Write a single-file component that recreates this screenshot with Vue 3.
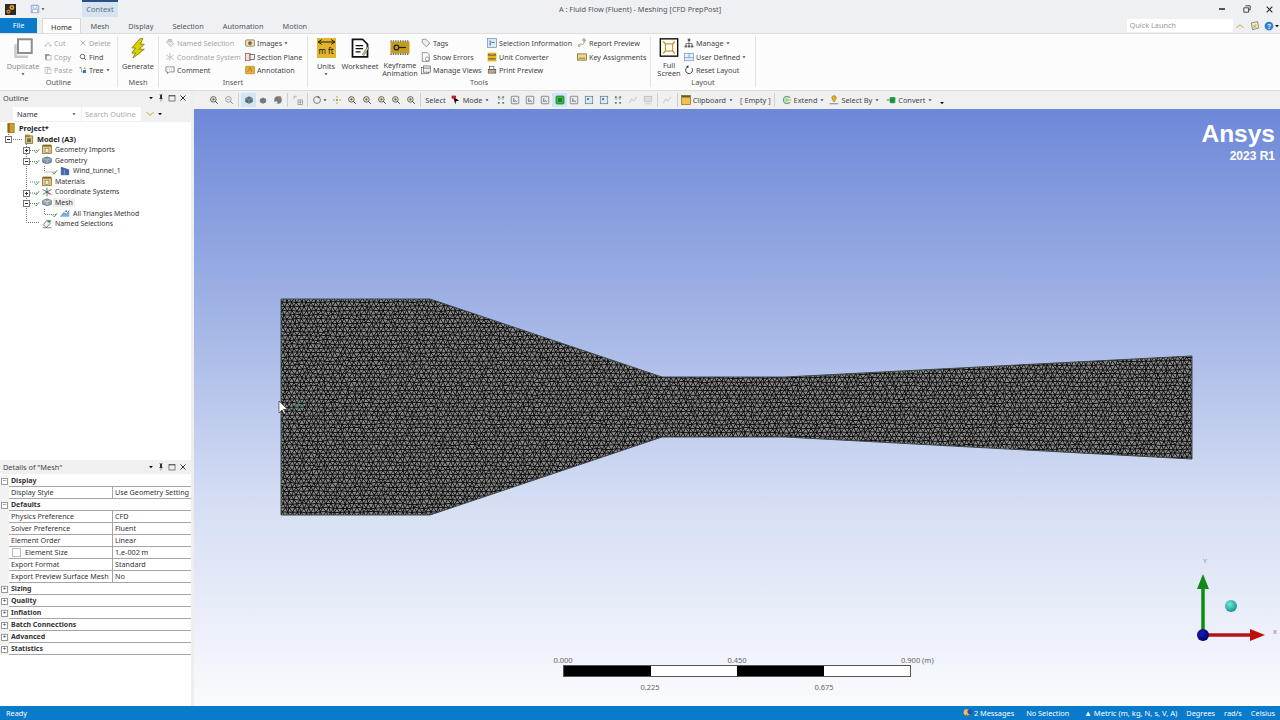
<script setup>
import { computed } from 'vue'

// small icon set, all drawn on a 16x16 box
const icons = {
  app: '<rect width="16" height="16" fill="#2b2b2b"/><circle cx="10" cy="5" r="3.6" fill="#e8a020"/><circle cx="5" cy="11" r="3" fill="#d97a10"/><circle cx="10" cy="5" r="1.2" fill="#2b2b2b"/><circle cx="5" cy="11" r="1" fill="#2b2b2b"/>',
  save: '<path d="M2 2h11l1 1v11H2z" fill="#dfe8f6" stroke="#5f86c4"/><rect x="5" y="2.5" width="6" height="4" fill="#fff" stroke="#5f86c4" stroke-width=".7"/><rect x="4.5" y="9" width="7" height="5" fill="#fff" stroke="#5f86c4" stroke-width=".7"/>',
  caret: '<path d="M4 6h8l-4 5z" fill="#444"/>',
  caretDark: '<path d="M3 5h10l-5 6z" fill="#000"/>',
  duplicate: '<path d="M1 5h2v9h9v2H1z" fill="#c9c9c9"/><rect x="4" y="1" width="11" height="11" fill="#fff" stroke="#8d8d8d" stroke-width="1.6"/>',
  cut: '<path d="M3 13l9-7M13 13L5 6" stroke="#aaa" fill="none"/><circle cx="3" cy="13" r="1.6" fill="none" stroke="#aaa"/><circle cx="13" cy="13" r="1.6" fill="none" stroke="#aaa"/>',
  copy: '<rect x="2" y="2" width="9" height="11" fill="#999"/><rect x="5" y="5" width="9" height="9" fill="#fff" stroke="#888"/>',
  paste: '<rect x="2" y="3" width="10" height="12" fill="#eee" stroke="#aaa"/><rect x="5" y="1.5" width="4" height="3" fill="#bbb"/><rect x="7" y="7" width="7" height="8" fill="#fff" stroke="#aaa"/>',
  del: '<path d="M3 3l10 10M13 3L3 13" stroke="#9a9a9a" stroke-width="1.4" fill="none"/>',
  find: '<circle cx="7" cy="7" r="4.5" fill="none" stroke="#333" stroke-width="1.4"/><path d="M10 10l4 4" stroke="#333" stroke-width="1.6"/>',
  tree: '<rect x="1" y="2" width="4" height="3" fill="#d0a020"/><path d="M5 5v7h3" stroke="#555" fill="none"/><rect x="8" y="8" width="6" height="6" fill="#3a74c4"/><rect x="10" y="3" width="3" height="3" fill="#999"/>',
  bolt: '<path d="M10 0L3 8h3L3 12l3 0-2 4 9-7h-4l4-4h-3l2-5z" fill="#d9d000" stroke="#8d7b00" stroke-width=".7"/>',
  named: '<path d="M2 6l5-4 7 7-5 5z" fill="#e6e6e6" stroke="#aaa"/><rect x="6" y="2" width="5" height="4" fill="#ccc" stroke="#aaa" stroke-width=".6"/>',
  coord: '<path d="M8 2v12M2 5l12 7M14 5L2 12" stroke="#bbb" stroke-width="1.4"/>',
  comment: '<path d="M1.5 3h13v8H7l-3 3v-3H1.5z" fill="#fff" stroke="#555"/><path d="M4 7h1M7 7h1M10 7h1" stroke="#555"/>',
  images: '<rect x="1" y="3" width="14" height="10" rx="1" fill="#eee3b8" stroke="#555"/><circle cx="8" cy="8" r="3" fill="#8c5a20"/>',
  section: '<rect x="1" y="2" width="7" height="12" fill="#f3e7c0" stroke="#912a4a"/><rect x="8" y="4" width="7" height="8" fill="#eee" stroke="#333"/>',
  annotation: '<rect x="1" y="2" width="14" height="12" rx="1" fill="#e5b22a" stroke="#a97b10"/><path d="M4 11l4-7 3 7" stroke="#b03aa0" fill="none"/>',
  sheet: '<path d="M2 1h8l4 4v10H2z" fill="#fff" stroke="#111" stroke-width="1.4"/><path d="M4.500 6h6M4.500 8.500h6M4.500 11h4" stroke="#111"/><path d="M10 13l4-6 1 1-4 6z" fill="#d8cf92" stroke="#555" stroke-width=".5"/>',
  keyframe: '<rect x="0" y="3" width="16" height="10" fill="#c29c1e"/><path d="M0 2.500h16M0 13.500h16" stroke="#222" stroke-dasharray="1 1"/><circle cx="5" cy="8" r="2" fill="none" stroke="#222"/><path d="M7 8h6" stroke="#222"/>',
  tags: '<path d="M2 2h6l6 6-5 6-7-6z" fill="#eee" stroke="#666"/>',
  errors: '<path d="M2 1h8l3 3v11H2z" fill="#fff" stroke="#555"/><circle cx="10" cy="11" r="3" fill="#fff" stroke="#666"/>',
  views: '<rect x="1" y="4" width="11" height="10" fill="#fff" stroke="#555"/><rect x="4" y="1.500" width="11" height="10" fill="#eee" stroke="#555"/><path d="M4 5h11" stroke="#555"/>',
  selinfo: '<rect x="1" y="1" width="14" height="14" fill="#dfeaf6" stroke="#4e7fb5"/><path d="M5 4v8M7 7h5" stroke="#1a4f8a" stroke-width="1.300"/>',
  converter: '<rect x="1" y="1" width="14" height="14" fill="#e2b52e"/><path d="M2 5h12M2 5l2-2M14 5l-2-2M2 11h12" stroke="#222" fill="none"/>',
  print: '<rect x="2" y="7" width="12" height="6" fill="#aaa" stroke="#444"/><rect x="4" y="2" width="7" height="5" fill="#fff" stroke="#444"/><circle cx="5" cy="12" r="2.500" fill="#d9a326"/>',
  report: '<path d="M2 13l4-4 3 2 5-8" stroke="#777" fill="none"/><circle cx="11" cy="3" r="2" fill="#eed889" stroke="#777"/><rect x="2" y="11" width="3" height="3" fill="#eed889" stroke="#777" stroke-width=".6"/>',
  keys: '<rect x="1" y="3" width="14" height="10" fill="#f0d586" stroke="#5a4a1a"/><path d="M3 10h10" stroke="#5a4a1a"/>',
  fullscreen: '<rect x=".7" y=".7" width="14.600" height="14.600" fill="#fff" stroke="#111" stroke-width="1.200"/><rect x="5" y="5" width="6" height="6" fill="none" stroke="#c29c1e"/><path d="M3 3l2 2M13 3l-2 2M3 13l2-2M13 13l-2-2" stroke="#c29c1e" stroke-width="1.200"/>',
  manage: '<path d="M8 5v4M3 12V9h10v3M8 9v3" stroke="#333" fill="none"/><rect x="6" y="1" width="4" height="4" fill="#555"/><rect x="1" y="12" width="4" height="3" fill="#555"/><rect x="6" y="12" width="4" height="3" fill="#555"/><rect x="11" y="12" width="4" height="3" fill="#555"/>',
  userdef: '<rect x="1" y="2" width="14" height="12" fill="#e7f0fa" stroke="#5f86c4"/><path d="M8 2v7M1 9h14" stroke="#5f86c4"/>',
  reset: '<path d="M12.500 5a5.500 5.500 0 1 1-6-2" fill="none" stroke="#333" stroke-width="1.500"/><path d="M7 0v5L3.500 2.800z" fill="#333"/>',
  zoomIn: '<circle cx="7" cy="7" r="4.500" fill="#e5e0c6" stroke="#444" stroke-width="1.200"/><path d="M10 10l4 4" stroke="#444" stroke-width="1.600"/><path d="M5 7h4M7 5v4" stroke="#444"/>',
  zoomOut: '<circle cx="7" cy="7" r="4.500" fill="#eee" stroke="#888" stroke-width="1.200"/><path d="M10 10l4 4" stroke="#888" stroke-width="1.600"/><path d="M5 7h4" stroke="#888"/>',
  cube: '<path d="M8 2l6 3v6l-6 3-6-3V5z" fill="#5d6a72"/><path d="M8 8l6-3M8 8L2 5M8 8v6" stroke="#b5bfc5" stroke-width=".7"/>',
  cube2: '<path d="M8 4l5 2.500v5L8 14l-5-2.500v-5z" fill="#6f7c84"/>',
  cube3: '<circle cx="8" cy="8" r="6" fill="#6f7c84"/><circle cx="11" cy="4" r="2.200" fill="#d26a3a"/><circle cx="5" cy="12" r="2" fill="#eee"/>',
  grid: '<path d="M1 1h5v2H3v3H1z" fill="#bbb"/><rect x="8" y="8" width="7" height="7" fill="#fff" stroke="#777"/><path d="M11.500 8v7M8 11.500h7" stroke="#777"/>',
  rotate: '<circle cx="8" cy="8" r="5.500" fill="none" stroke="#666" stroke-width="1.300"/><path d="M11 1l1 4-4-1z" fill="#666"/>',
  pan: '<path d="M8 1l2 3H6zM8 15l-2-3h4zM1 8l3-2v4zM15 8l-3 2V6z" fill="#c9b04a"/><circle cx="8" cy="8" r="1.500" fill="#777"/>',
  mode: '<path d="M3 2l10 7-5 1-1 5z" fill="#111"/><path d="M1 1h7v5H1z" fill="#c0202e"/>',
  nodes: '<path d="M3 2h3v3H3zM10 2h3v3h-3zM3 11h3v3H3zM10 11h3v3h-3z" fill="#5d8a5d"/><path d="M4 7h2M10 7h2M8 4v2" stroke="#6b6b6b"/>',
  face: '<rect x="2" y="2" width="12" height="12" rx="1" fill="#e8edf0" stroke="#555"/><path d="M6 5v6l2-2 3 2" fill="none" stroke="#333"/>',
  faceOn: '<rect x="1.500" y="1.500" width="13" height="13" rx="2" fill="#39b54a" stroke="#146a22"/><path d="M5 5h6v6H5z" fill="#1e7d2f"/>',
  body: '<rect x="2" y="2" width="12" height="12" fill="#dde8ee" stroke="#3f6f7f"/><path d="M5 5h3v3H5z" fill="#3f6f7f"/>',
  fade: '<path d="M2 13l4-7 3 4 5-7" stroke="#bbb" fill="none" stroke-width="1.300"/>',
  fade2: '<rect x="2" y="2" width="12" height="9" fill="#ddd" stroke="#bbb"/><path d="M3 14h10" stroke="#bbb"/>',
  clipboard: '<rect x="1" y="1" width="14" height="14" fill="#f0c24c" stroke="#7c5b15"/><rect x="1" y="1" width="14" height="3" fill="#6c5a24"/>',
  extend: '<circle cx="8" cy="8" r="6" fill="#bfe5bf" stroke="#2e8a44" stroke-width="1.200"/><path d="M8 8l6-4v8z" fill="#fff"/><path d="M6 8h8" stroke="#c03a2a"/>',
  selectBy: '<path d="M8 1a3.500 3.500 0 0 1 3.500 3.500C11.500 7 8 11 8 11S4.500 7 4.500 4.500A3.500 3.500 0 0 1 8 1z" fill="#e0b429" stroke="#8f6f10"/><path d="M1 14h14" stroke="#444"/>',
  convert: '<path d="M1 8h5" stroke="#2e8a44" stroke-width="1.500"/><rect x="6" y="3" width="9" height="10" rx="2" fill="#22a548"/><path d="M8 6v5M11 6v5" stroke="#0f5d27"/>',
  chevron: '<path d="M2 11l6-5 6 5" fill="none" stroke="#c9a02a" stroke-width="1.500"/>',
  chevronDown: '<path d="M2 5l6 5 6-5" fill="none" stroke="#c9a02a" stroke-width="1.500"/>',
  note: '<path d="M2 3l10-2 2 10-10 3z" fill="#f6ecb4" stroke="#555"/><path d="M5 6l5 5M10 5l-5 6" stroke="#777"/>',
  help: '<circle cx="8" cy="8" r="7" fill="#2d7fd0"/><text x="8" y="12" font-size="11" font-weight="700" text-anchor="middle" fill="#fff" font-family="Liberation Sans">?</text>',
  pin: '<path d="M5 1h6v1H10v6l2 2H4l2-2V2H5zM7.500 10h1v5h-1z" fill="#333"/>',
  maximize: '<rect x="2" y="3" width="12" height="11" fill="none" stroke="#333" stroke-width="1.200"/><path d="M2 4h12" stroke="#333" stroke-width="1.200"/>',
  close: '<path d="M3 3l10 10M13 3L3 13" stroke="#222" stroke-width="1.800"/>',
  book: '<rect x="3" y="1" width="10" height="14" fill="#d2a21c" stroke="#6e5410"/><rect x="3" y="1" width="3" height="14" fill="#8a6a14"/>',
  model: '<rect x="2" y="3" width="12" height="12" fill="#e2c16e" stroke="#6e5410"/><rect x="2" y="1.500" width="7" height="3" fill="#c49a2a" stroke="#6e5410" stroke-width=".6"/><rect x="5" y="7" width="6" height="6" fill="#57707f"/>',
  folder: '<rect x="1" y="3" width="14" height="12" fill="#e5c56f" stroke="#6e5410"/><rect x="1" y="1" width="14" height="3" fill="#7d6a2e"/><rect x="5" y="7" width="6" height="6" fill="#e8e8e8" stroke="#555" stroke-width=".6"/>',
  geometry: '<path d="M8 3l7 2.500v6L8 14l-7-2.500v-6z" fill="#7f97ad" stroke="#46586a"/><path d="M1 5.500L8 8l7-2.500M8 8v6" stroke="#dfe7ee" stroke-width=".7" fill="none"/>',
  part: '<path d="M2 2l6 2 6 2v8H2z" fill="#3f67b5" stroke="#2d4880"/><path d="M7 6v8" stroke="#a8c0e8"/>',
  coords: '<path d="M8 1v14M1 4l14 8M15 4L1 12" stroke="#444" stroke-width="1.200"/><path d="M8 8l5 4" stroke="#c0202e" stroke-width="1.300"/><circle cx="8" cy="8" r="1.800" fill="#2e8a44"/>',
  meshIc: '<path d="M8 3l7 2.500v6L8 14l-7-2.500v-6z" fill="#9aa7b0" stroke="#46586a"/><path d="M1 5.500L8 8l7-2.500M8 8v6M4 4l4 4 4-4" stroke="#fff" stroke-width=".6" fill="none"/>',
  method: '<path d="M1 14l5-7 4 3 5-6v10z" fill="#7fb0dc"/><path d="M1 14l5-7 4 3 5-6" fill="none" stroke="#3a74b4"/><circle cx="10" cy="5" r="1.500" fill="#3a74b4"/>',
  namedSel: '<path d="M2 9l6-7 5 5-6 7z" fill="#eee" stroke="#444"/><path d="M1 14h14" stroke="#444"/><rect x="9" y="2" width="5" height="3" fill="#2e8a44"/>',
  check: '<path d="M2 9l4 4 8-10" fill="none" stroke="#14882e" stroke-width="2"/>',
  checkX: '<path d="M2 9l4 4 8-10" fill="none" stroke="#14882e" stroke-width="2"/><path d="M2 11l4 4M6 11l-4 4" stroke="#14882e"/>',
  messages: '<circle cx="6" cy="7" r="5" fill="#f0c24c"/><circle cx="11" cy="6" r="4" fill="#2d4fa8"/><path d="M3 12l3-2 1 3z" fill="#c6432c"/>',
}

const tabs = ['Mesh', 'Display', 'Selection', 'Automation', 'Motion']

const colOutlineA = [
  { icon: 'cut', label: 'Cut', off: true },
  { icon: 'copy', label: 'Copy', off: true },
  { icon: 'paste', label: 'Paste', off: true },
]
const colOutlineB = [
  { icon: 'del', label: 'Delete', off: true },
  { icon: 'find', label: 'Find' },
  { icon: 'tree', label: 'Tree', caret: true },
]
const colInsertA = [
  { icon: 'named', label: 'Named Selection', off: true },
  { icon: 'coord', label: 'Coordinate System', off: true },
  { icon: 'comment', label: 'Comment' },
]
const colInsertB = [
  { icon: 'images', label: 'Images', caret: true },
  { icon: 'section', label: 'Section Plane' },
  { icon: 'annotation', label: 'Annotation' },
]
const colToolsA = [
  { icon: 'tags', label: 'Tags' },
  { icon: 'errors', label: 'Show Errors' },
  { icon: 'views', label: 'Manage Views' },
]
const colToolsB = [
  { icon: 'selinfo', label: 'Selection Information' },
  { icon: 'converter', label: 'Unit Converter' },
  { icon: 'print', label: 'Print Preview' },
]
const colToolsC = [
  { icon: 'report', label: 'Report Preview' },
  { icon: 'keys', label: 'Key Assignments' },
]
const colLayout = [
  { icon: 'manage', label: 'Manage', caret: true },
  { icon: 'userdef', label: 'User Defined', caret: true },
  { icon: 'reset', label: 'Reset Layout' },
]

const toolGroups = [
  [{ icon: 'zoomIn' }, { icon: 'zoomOut' }],
  [{ icon: 'cube', on: true }, { icon: 'cube2' }, { icon: 'cube3' }],
  [{ icon: 'grid' }],
  [{ icon: 'rotate', caret: true }, { icon: 'pan' }, { icon: 'zoomIn' }, { icon: 'zoomIn' }, { icon: 'zoomIn' }, { icon: 'zoomIn' }, { icon: 'zoomIn' }],
  [
    { label: 'Select' },
    { icon: 'mode', label: 'Mode', caret: true },
    { icon: 'nodes' }, { icon: 'face' }, { icon: 'face' }, { icon: 'face' },
    { icon: 'faceOn', on: true }, { icon: 'face' }, { icon: 'body' }, { icon: 'body' },
    { icon: 'nodes' }, { icon: 'fade' }, { icon: 'fade2' },
  ],
  [{ icon: 'fade' }],
  [{ icon: 'clipboard', label: 'Clipboard', caret: true }, { label: '[ Empty ]' }],
  [
    { icon: 'extend', label: 'Extend', caret: true },
    { icon: 'selectBy', label: 'Select By', caret: true },
    { icon: 'convert', label: 'Convert', caret: true },
  ],
]

const treeRows = [
  { label: 'Project*', icon: 'book', x: 6, bold: true },
  { label: 'Model (A3)', icon: 'model', x: 24, bold: true },
  { label: 'Geometry Imports', icon: 'folder', x: 34, check: 'check' },
  { label: 'Geometry', icon: 'geometry', x: 34, check: 'check' },
  { label: 'Wind_tunnel_1', icon: 'part', x: 52, check: 'checkX' },
  { label: 'Materials', icon: 'folder', x: 34, check: 'check' },
  { label: 'Coordinate Systems', icon: 'coords', x: 34, check: 'check' },
  { label: 'Mesh', icon: 'meshIc', x: 34, check: 'check', hover: true },
  { label: 'All Triangles Method', icon: 'method', x: 52, check: 'check' },
  { label: 'Named Selections', icon: 'namedSel', x: 34, check: 'blank' },
]

const details = [
  { head: 'Display', open: true },
  { name: 'Display Style', value: 'Use Geometry Setting' },
  { head: 'Defaults', open: true },
  { name: 'Physics Preference', value: 'CFD' },
  { name: 'Solver Preference', value: 'Fluent' },
  { name: 'Element Order', value: 'Linear' },
  { name: 'Element Size', value: '1.e-002 m', box: true },
  { name: 'Export Format', value: 'Standard' },
  { name: 'Export Preview Surface Mesh', value: 'No' },
  { head: 'Sizing' },
  { head: 'Quality' },
  { head: 'Inflation' },
  { head: 'Batch Connections' },
  { head: 'Advanced' },
  { head: 'Statistics' },
]

// the wind tunnel outline, in viewport coordinates
const outline = '87,190 236,190 468,268 591,268 998,247 998,350 591,328 468,328 236,406 87,406'

// triangle mesh: jittered grid with a fixed seed so the picture stays the same
const meshPath = computed(() => {
  let seed = 12345
  const rnd = () => {
    seed = (seed * 16807) % 2147483647
    return seed / 2147483647 - 0.5
  }
  const dx = 4.8
  const dy = 4.2
  const cols = Math.ceil(912 / dx) + 2
  const rows = Math.ceil(218 / dy) + 2
  const pts = []
  for (let r = 0; r < rows; r++) {
    const row = []
    for (let c = 0; c < cols; c++) {
      row.push([
        (86 + c * dx + (r % 2) * dx * 0.5 + rnd() * 1.8).toFixed(1),
        (189 + r * dy + rnd() * 1.6).toFixed(1),
      ])
    }
    pts.push(row)
  }
  let d = ''
  for (let r = 0; r < rows; r++) {
    for (let c = 0; c < cols; c++) {
      const p = pts[r][c]
      if (c + 1 < cols) d += `M${p}L${pts[r][c + 1]}`
      if (r + 1 < rows) {
        d += `M${p}L${pts[r + 1][c]}`
        const other = r % 2 ? c + 1 : c - 1
        if (other >= 0 && other < cols) d += `M${p}L${pts[r + 1][other]}`
      }
    }
  }
  return d
})
</script>

<template>
  <div class="app">
    <header class="top">
      <div class="titlebar">
        <div class="title-left">
          <svg class="ic appicon" viewBox="0 0 16 16" v-html="icons.app"></svg>
          <svg class="ic save" viewBox="0 0 16 16" v-html="icons.save"></svg>
          <svg class="ic tiny" viewBox="0 0 16 16" v-html="icons.caret"></svg>
          <div class="context">Context</div>
        </div>
        <div class="title">A : Fluid Flow (Fluent) - Meshing [CFD PrepPost]</div>
        <div class="win-buttons">
          <span class="win-min"></span>
          <svg class="win-restore" viewBox="0 0 10 10"><path d="M3 1h6v5H7.500M1 3.500h6v5.500H1z" fill="none" stroke="#333" stroke-width="1.100"/></svg>
          <svg class="win-close" viewBox="0 0 16 16" v-html="icons.close"></svg>
        </div>
      </div>
      <div class="tabrow">
        <div class="file-tab">File</div>
        <div class="home-tab">Home</div>
        <div v-for="t in tabs" :key="t" class="tab">{{ t }}</div>
        <div class="quick">
          <div class="quick-input">Quick Launch</div>
          <svg class="ic" viewBox="0 0 16 16" v-html="icons.chevron"></svg>
          <svg class="ic" viewBox="0 0 16 16" v-html="icons.note"></svg>
          <svg class="ic" viewBox="0 0 16 16" v-html="icons.help"></svg>
          <svg class="ic tiny help-caret" viewBox="0 0 16 16" v-html="icons.caretDark"></svg>
        </div>
      </div>
    </header>

    <section class="ribbon">
      <div class="group g-outline">
        <div class="group-body">
          <div class="big off">
            <svg class="big-ic" viewBox="0 0 16 16" v-html="icons.duplicate"></svg>
            <span>Duplicate</span>
            <svg class="ic tiny" viewBox="0 0 16 16" v-html="icons.caret"></svg>
          </div>
          <div v-for="(col, i) in [colOutlineA, colOutlineB]" :key="i" class="col">
            <div v-for="it in col" :key="it.label" class="item" :class="{ off: it.off }">
              <svg class="ic" viewBox="0 0 16 16" v-html="icons[it.icon]"></svg>{{ it.label }}
              <svg v-if="it.caret" class="ic tiny" viewBox="0 0 16 16" v-html="icons.caret"></svg>
            </div>
          </div>
        </div>
        <div class="group-label">Outline</div>
      </div>

      <div class="group g-mesh">
        <div class="group-body">
          <div class="big">
            <svg class="big-ic" viewBox="0 0 16 16" v-html="icons.bolt"></svg>
            <span>Generate</span>
          </div>
        </div>
        <div class="group-label">Mesh</div>
      </div>

      <div class="group g-insert">
        <div class="group-body">
          <div v-for="(col, i) in [colInsertA, colInsertB]" :key="i" class="col" :class="'insert-' + i">
            <div v-for="it in col" :key="it.label" class="item" :class="{ off: it.off }">
              <svg class="ic" viewBox="0 0 16 16" v-html="icons[it.icon]"></svg>{{ it.label }}
              <svg v-if="it.caret" class="ic tiny" viewBox="0 0 16 16" v-html="icons.caret"></svg>
            </div>
          </div>
        </div>
        <div class="group-label">Insert</div>
      </div>

      <div class="group g-tools">
        <div class="group-body">
          <div class="big b-units">
            <div class="units-ic">
              <svg class="units-arrow" viewBox="0 0 16 6"><path d="M1 3h14M1 3l3-2M1 3l3 2M15 3l-3-2M15 3l-3 2" stroke="#111" fill="none" stroke-width=".8"/></svg>
              <span>m ft</span>
            </div>
            <span>Units</span>
            <svg class="ic tiny" viewBox="0 0 16 16" v-html="icons.caret"></svg>
          </div>
          <div class="big b-sheet">
            <svg class="big-ic" viewBox="0 0 16 16" v-html="icons.sheet"></svg>
            <span>Worksheet</span>
          </div>
          <div class="big b-key">
            <svg class="big-ic" viewBox="0 0 16 16" v-html="icons.keyframe"></svg>
            <span>Keyframe<br />Animation</span>
          </div>
          <div v-for="(col, i) in [colToolsA, colToolsB, colToolsC]" :key="i" class="col" :class="'tools-' + i">
            <div v-for="it in col" :key="it.label" class="item">
              <svg class="ic" viewBox="0 0 16 16" v-html="icons[it.icon]"></svg>{{ it.label }}
            </div>
          </div>
        </div>
        <div class="group-label">Tools</div>
      </div>

      <div class="group g-layout">
        <div class="group-body">
          <div class="big b-full">
            <svg class="big-ic" viewBox="0 0 16 16" v-html="icons.fullscreen"></svg>
            <span>Full<br />Screen</span>
          </div>
          <div class="col">
            <div v-for="it in colLayout" :key="it.label" class="item">
              <svg class="ic" viewBox="0 0 16 16" v-html="icons[it.icon]"></svg>{{ it.label }}
              <svg v-if="it.caret" class="ic tiny" viewBox="0 0 16 16" v-html="icons.caret"></svg>
            </div>
          </div>
        </div>
        <div class="group-label">Layout</div>
      </div>
    </section>

    <main class="workspace">
      <aside class="side">
        <div class="pane-head">
          <span>Outline</span>
          <span class="dots"></span>
          <svg class="ic tiny" viewBox="0 0 16 16" v-html="icons.caretDark"></svg>
          <svg class="ic" viewBox="0 0 16 16" v-html="icons.pin"></svg>
          <svg class="ic" viewBox="0 0 16 16" v-html="icons.maximize"></svg>
          <svg class="ic" viewBox="0 0 16 16" v-html="icons.close"></svg>
        </div>
        <div class="outline-tools">
          <span class="grip"></span>
          <div class="combo">Name<svg class="ic tiny" viewBox="0 0 16 16" v-html="icons.caret"></svg></div>
          <div class="search">Search Outline</div>
          <svg class="ic chev" viewBox="0 0 16 16" v-html="icons.chevronDown"></svg>
          <svg class="ic tiny" viewBox="0 0 16 16" v-html="icons.caretDark"></svg>
        </div>
        <div class="tree">
          <svg class="tree-lines" width="80" height="110">
            <g fill="none" stroke="#777" stroke-dasharray="1 1">
              <path d="M8.500 8V17M11 17.500H23M26.500 20V100.500H40M30 28.500H38M30 39.500H38M30 60H38M30 71H38M30 81.500H38M44.500 44V50H56M44.500 87V92.500H56" />
            </g>
            <g fill="#fff" stroke="#777">
              <rect x="5.500" y="14.500" width="6" height="6" />
              <rect x="23.500" y="25.500" width="6" height="6" />
              <rect x="23.500" y="36.500" width="6" height="6" />
              <rect x="23.500" y="68.500" width="6" height="6" />
              <rect x="23.500" y="78.500" width="6" height="6" />
            </g>
            <path d="M7 17.500h3M25 28.500h3M26.500 27v3M25 39.500h3M25 71.500h3M26.500 70v3M25 81.500h3" stroke="#333" />
          </svg>
          <div v-for="row in treeRows" :key="row.label" class="tree-row" :style="{ paddingLeft: row.x + 'px' }">
            <svg v-if="row.check && row.check !== 'blank'" class="ic check" viewBox="0 0 16 16" v-html="icons[row.check]"></svg>
            <span v-else-if="row.check" class="check"></span>
            <svg class="ic tree-ic" viewBox="0 0 16 16" v-html="icons[row.icon]"></svg>
            <span :class="{ strong: row.bold, hover: row.hover }">{{ row.label }}</span>
          </div>
        </div>

        <div class="pane-head">
          <span>Details of "Mesh"</span>
          <span class="dots"></span>
          <svg class="ic tiny" viewBox="0 0 16 16" v-html="icons.caretDark"></svg>
          <svg class="ic" viewBox="0 0 16 16" v-html="icons.pin"></svg>
          <svg class="ic" viewBox="0 0 16 16" v-html="icons.maximize"></svg>
          <svg class="ic" viewBox="0 0 16 16" v-html="icons.close"></svg>
        </div>
        <div class="details">
          <div v-for="d in details" :key="d.head || d.name" class="drow">
            <div class="gutter">
              <span v-if="d.head" class="exp">{{ d.open ? '−' : '+' }}</span>
            </div>
            <div v-if="d.head" class="dhead">{{ d.head }}</div>
            <template v-else>
              <div class="dname" :class="{ indent: d.box }"><span v-if="d.box" class="box"></span>{{ d.name }}</div>
              <div class="dvalue">{{ d.value }}</div>
            </template>
          </div>
        </div>
      </aside>

      <div class="right">
        <div class="toolbar">
          <template v-for="(g, gi) in toolGroups" :key="gi">
            <div class="tgroup" :class="'tg-' + gi">
              <div v-for="(t, ti) in g" :key="ti" class="tool" :class="{ on: t.on, wide: t.label }">
                <svg v-if="t.icon" class="ic" viewBox="0 0 16 16" v-html="icons[t.icon]"></svg>
                <span v-if="t.label">{{ t.label }}</span>
                <svg v-if="t.caret" class="ic tiny" viewBox="0 0 16 16" v-html="icons.caret"></svg>
              </div>
            </div>
          </template>
          <svg class="ic tiny end-caret" viewBox="0 0 16 16" v-html="icons.caretDark"></svg>
        </div>

        <div class="viewport">
          <svg class="scene" width="1086" height="597" viewBox="0 0 1086 597">
            <defs>
              <clipPath id="tunnel"><polygon :points="outline" /></clipPath>
              <radialGradient id="ballCyan" cx="40%" cy="35%" r="70%">
                <stop offset="0" stop-color="#6fe8dc" />
                <stop offset="1" stop-color="#138f8c" />
              </radialGradient>
              <radialGradient id="ballBlue" cx="40%" cy="35%" r="70%">
                <stop offset="0" stop-color="#1a1ac0" />
                <stop offset="1" stop-color="#03035e" />
              </radialGradient>
            </defs>
            <polygon :points="outline" fill="#8a8a8a" />
            <path clip-path="url(#tunnel)" :d="meshPath" stroke="#050505" stroke-width="0.9" fill="none" />
            <polygon :points="outline" fill="none" stroke="#3c4a4a" stroke-width="1" />
            <path d="M104 290v12M98 296h12" stroke="#4f9a7a" stroke-width=".7" />
            <path d="M85 292v12l3-3 2 4 1.500-.700-2-4h4z" fill="#fff" stroke="#222" stroke-width=".6" />

            <g class="triad">
              <path d="M1009 526V478" stroke="#0d8c12" stroke-width="3.500" />
              <path d="M1009 465l6 15h-12z" fill="#118a18" />
              <path d="M1009 526h48" stroke="#b01616" stroke-width="3.500" />
              <path d="M1071 526l-15-6v12z" fill="#c00f0f" />
              <circle cx="1009" cy="526" r="6" fill="url(#ballBlue)" />
              <circle cx="1037" cy="497" r="6" fill="url(#ballCyan)" />
            </g>
            <text x="1009" y="454" class="axis y">Y</text>
            <text x="1079" y="525" class="axis x">X</text>
          </svg>

          <div class="logo">
            <div class="logo-name">Ansys</div>
            <div class="logo-rel">2023 R1</div>
          </div>

          <div class="scale">
            <div class="scale-top"><span>0.000</span><span>0.450</span><span class="last">0.900 (m)</span></div>
            <div class="scale-bar"><i></i><b></b><i></i><b></b></div>
            <div class="scale-bottom"><span>0.225</span><span>0.675</span></div>
          </div>
        </div>
      </div>
    </main>

    <footer class="status">
      <span>Ready</span>
      <div class="status-right">
        <span class="s-msg"><svg class="ic" viewBox="0 0 16 16" v-html="icons.messages"></svg>2 Messages</span>
        <span>No Selection</span>
        <span class="s-units">▲ Metric (m, kg, N, s, V, A)</span>
        <span>Degrees</span>
        <span>rad/s</span>
        <span>Celsius</span>
      </div>
    </footer>
  </div>
</template>

<style>
html, body {
  margin: 0;
  overflow: hidden;
  background: #fff;
}
</style>

<style scoped>
.app {
  width: 1280px;
  height: 720px;
  display: flex;
  flex-direction: column;
  font-family: "Noto Sans", "Liberation Sans", sans-serif;
  font-size: 7.35px;
  color: #333;
  overflow: hidden;
}
.ic {
  width: 10px;
  height: 10px;
  flex: none;
}
.ic.tiny {
  width: 6px;
  height: 6px;
}

/* title + tabs */
.top {
  background: #eef0f3;
  height: 33px;
  flex: none;
}
.titlebar {
  display: grid;
  grid-template-columns: 1fr auto 1fr;
  height: 18px;
  align-items: center;
}
.title-left {
  display: flex;
  align-items: center;
  height: 18px;
  padding-left: 5px;
}
.appicon {
  width: 11px;
  height: 11px;
}
.save {
  margin-left: 14px;
}
.context {
  align-self: flex-start;
  height: 17px;
  width: 36px;
  margin-left: 36px;
  background: #d6e4f2;
  border-top: 2px solid #2b4f8a;
  color: #5f6f86;
  font-size: 7.5px;
  text-align: center;
  line-height: 15px;
  box-sizing: border-box;
}
.title {
  color: #555;
}
.win-buttons {
  display: flex;
  justify-content: flex-end;
  align-items: center;
  padding-right: 6px;
  gap: 14px;
}
.win-min {
  width: 6px;
  height: 1.5px;
  background: #555;
}
.win-restore {
  width: 8px;
  height: 8px;
  margin-left: 4px;
}
.win-close {
  width: 9px;
  height: 9px;
}
.tabrow {
  display: flex;
  align-items: stretch;
  height: 15px;
  position: relative;
}
.file-tab {
  width: 37px;
  background: #0a7acb;
  color: #fff;
  text-align: center;
  line-height: 15px;
}
.home-tab {
  width: 39px;
  margin-left: 5px;
  background: #fcfcfc;
  border: 1px solid #d8d8d8;
  border-bottom: 0;
  box-sizing: border-box;
  color: #333;
  text-align: center;
  line-height: 16px;
}
.tab {
  padding: 0 9.5px;
  color: #555;
  line-height: 16px;
}
.quick {
  margin-left: auto;
  display: flex;
  align-items: center;
  gap: 4.5px;
}
.quick-input {
  width: 106px;
  height: 13px;
  margin-right: -2px;
  background: #fff;
  box-sizing: border-box;
  padding-left: 3px;
  color: #999;
  line-height: 13px;
}
.help-caret {
  margin-left: -4.5px;
}

/* ribbon */
.ribbon {
  flex: none;
  height: 58px;
  background: #fcfcfc;
  border-top: 1px solid #dedede;
  border-bottom: 1px solid #dcdcdc;
  box-sizing: border-box;
  display: flex;
  padding: 2px 0 3px;
}
.group {
  display: flex;
  flex-direction: column;
  box-sizing: border-box;
  border-right: 1px solid #e3e3e3;
}
.group-body {
  flex: 1;
  min-height: 0;
  display: flex;
}
.group-label {
  text-align: center;
  color: #555;
  line-height: 10px;
}
.g-outline {
  width: 118px;
}
.g-mesh {
  width: 41px;
}
.g-insert {
  width: 149px;
}
.g-tools {
  width: 343px;
}
.g-layout {
  width: 105px;
}
.big {
  display: flex;
  flex-direction: column;
  align-items: center;
  text-align: center;
  line-height: 8px;
  margin-top: 2px;
  color: #444;
}
.big-ic {
  width: 20px;
  height: 20px;
  margin-bottom: 4px;
}
.big.off {
  color: #8c8c8c;
}
.big .tiny {
  margin-top: 1px;
}
.g-outline .big {
  width: 36px;
  margin-left: 5px;
}
.g-mesh .big {
  width: 40px;
}
.col {
  display: flex;
  flex-direction: column;
}
.item {
  height: 14.3px;
  display: flex;
  align-items: center;
  gap: 2px;
  white-space: nowrap;
  color: #444;
  font-size: 7.2px;
}
.item.off {
  color: #a5a5a5;
}
.item .tiny {
  margin-left: -1px;
}
.g-outline .item .ic:not(.tiny) {
  width: 8px;
  height: 8px;
}
.g-outline .col:nth-child(2) {
  width: 35px;
  margin-left: 3px;
}
.insert-0 {
  width: 80px;
  margin-left: 6px;
}
.b-units {
  width: 24px;
  margin-left: 6px;
}
.units-ic {
  width: 19px;
  height: 20px;
  margin-bottom: 4px;
  background: #e2b52e;
  color: #111;
  display: flex;
  flex-direction: column;
  align-items: center;
  font-size: 8px;
  line-height: 10px;
}
.units-arrow {
  width: 19px;
  height: 8px;
  flex: none;
}
.b-sheet {
  width: 38px;
  margin-left: 3px;
}
.b-key {
  width: 40px;
  margin-left: 1px;
}
.tools-0 {
  width: 66px;
  margin-left: 1px;
}
.tools-1 {
  width: 90px;
}
.b-full {
  width: 26px;
  margin-left: 5px;
  margin-right: 2px;
}

/* workspace */
.workspace {
  flex: 1;
  display: flex;
  min-height: 0;
}
.side {
  width: 194px;
  flex: none;
  display: flex;
  flex-direction: column;
  background: #fff;
  border-right: 3px solid #eeeeee;
  box-sizing: border-box;
}
.pane-head {
  height: 14px;
  flex: none;
  background: #f0f0f0;
  display: flex;
  align-items: center;
  gap: 3px;
  padding: 0 4px 0 3px;
  color: #444;
}
.pane-head .ic:not(.tiny) {
  width: 8px;
  height: 8px;
}
.dots {
  flex: 1;
  height: 3px;
  margin: 0 2px;
  background: radial-gradient(circle, #bbb 0.5px, transparent 0.6px) 0 0 / 2px 2px;
}
.outline-tools {
  height: 17px;
  flex: none;
  background: #f0f0f0;
  display: flex;
  align-items: center;
  padding-left: 4px;
}
.grip {
  width: 3px;
  height: 12px;
  margin-right: 6px;
  background: radial-gradient(circle, #aaa 0.5px, transparent 0.6px) 0 0 / 2px 2px;
}
.combo {
  width: 68px;
  height: 14px;
  background: #fff;
  padding: 0 4px;
  box-sizing: border-box;
  display: flex;
  align-items: center;
  justify-content: space-between;
  margin-right: 1px;
}
.search {
  width: 59px;
  height: 14px;
  background: #fff;
  padding-left: 3px;
  box-sizing: border-box;
  line-height: 14px;
  color: #aaa;
}
.chev {
  margin-left: 4px;
  margin-right: 2px;
}
.tree {
  position: relative;
  height: 338px;
  flex: none;
  padding-top: 1px;
  box-sizing: border-box;
  font-size: 6.9px;
}
.tree-lines {
  position: absolute;
  left: 0;
  top: 0;
}
.tree-row {
  height: 10.6px;
  display: flex;
  align-items: center;
  gap: 2px;
  position: relative;
  white-space: nowrap;
}
.strong {
  font-weight: 700;
  font-size: 7.35px;
  color: #222;
}
.hover {
  background: #efefef;
  padding: 0 2px;
  margin-left: -2px;
}
.check {
  width: 6px;
  height: 6px;
  margin-top: 3px;
}
.tree-ic {
  width: 10px;
  height: 10px;
  margin-right: 1px;
}
.details {
  background: #fff;
  padding-top: 1px;
  font-size: 7.2px;
}
.drow {
  display: flex;
  height: 12px;
  box-sizing: border-box;
}
.gutter {
  width: 9px;
  flex: none;
  background: #f2f2f2;
  display: flex;
  align-items: center;
  justify-content: center;
}
.exp {
  width: 5px;
  height: 5px;
  border: 1px solid #999;
  background: #fff;
  font-size: 6px;
  line-height: 4px;
  text-align: center;
  color: #222;
}
.dhead {
  flex: 1;
  border-bottom: 1px solid #a5a5a5;
  padding-left: 2px;
  font-weight: 700;
  font-size: 7px;
  line-height: 11px;
  color: #333;
}
.dname {
  width: 104px;
  flex: none;
  box-sizing: border-box;
  padding-left: 2px;
  line-height: 11px;
  border-bottom: 1px solid #a5a5a5;
  border-right: 1px solid #a5a5a5;
  white-space: nowrap;
  display: flex;
  align-items: center;
}
.dname.indent {
  padding-left: 3px;
}
.box {
  width: 7px;
  height: 7px;
  border: 1px solid #bbb;
  margin-right: 4px;
  background: #fff;
}
.dvalue {
  flex: 1;
  padding-left: 2px;
  line-height: 11px;
  border-bottom: 1px solid #a5a5a5;
  white-space: nowrap;
}

/* viewport toolbar */
.right {
  flex: 1;
  min-width: 0;
  display: flex;
  flex-direction: column;
}
.toolbar {
  height: 18px;
  flex: none;
  background: #f0f0f0;
  display: flex;
  align-items: center;
  padding-left: 11px;
  white-space: nowrap;
}
.tgroup {
  display: flex;
  align-items: center;
  height: 14px;
  padding: 0 2px;
  border-right: 1px solid #d0d0d0;
}
.tool {
  width: 14.7px;
  height: 14px;
  display: flex;
  align-items: center;
  justify-content: center;
  flex: none;
  color: #444;
}
.tool.on {
  background: #cfe6f8;
}
.tool.wide {
  width: auto;
  gap: 2px;
  padding: 0 3px;
}
.tg-3 .tool:first-child {
  width: 20px;
}
.tg-4 .tool:first-child {
  padding: 0 2px;
}
.tg-6 .tool.wide,
.tg-7 .tool.wide {
  padding: 0 1px;
}
.tg-6 .tool + .tool {
  margin-left: 4px;
}
.tg-7 .tool:first-child {
  margin-left: 4px;
}
.tg-7 .tool:nth-child(2) {
  margin-left: 2px;
}
.tg-7 .tool:nth-child(3) {
  margin-left: 4px;
}
.tg-7 {
  border-right: 0;
}
.end-caret {
  margin-left: 3px;
  margin-top: 6px;
}

/* graphics canvas */
.viewport {
  flex: 1;
  position: relative;
  overflow: hidden;
  background: linear-gradient(#6d88d8 0%, #a3b5e6 35%, #d4ddf3 65%, #fafbfe 100%);
}
.scene {
  position: absolute;
  left: 0;
  top: 0;
}
.axis {
  font: 6px "Liberation Sans", sans-serif;
}
.axis.y {
  fill: #4a9a5a;
}
.axis.x {
  fill: #c05050;
}
.logo {
  position: absolute;
  right: 5px;
  top: 11px;
  color: #fff;
  text-align: right;
  font-family: "Liberation Sans", sans-serif;
  font-weight: 700;
}
.logo-name {
  font-size: 24.5px;
  line-height: 28px;
}
.logo-rel {
  font-size: 12px;
  line-height: 14px;
  margin-top: 1px;
}
.scale {
  position: absolute;
  left: 369px;
  top: 546px;
  width: 348px;
  color: #666;
  font-size: 7.5px;
}
.scale-top {
  position: relative;
  height: 10px;
  line-height: 10px;
}
.scale-top span {
  position: absolute;
  left: 174px;
  transform: translateX(-50%);
  white-space: nowrap;
}
.scale-top span:first-child {
  left: 0;
}
.scale-top .last {
  left: 338px;
  transform: none;
}
.scale-bar {
  display: flex;
  height: 12px;
  border: 1px solid #555;
  box-sizing: border-box;
}
.scale-bar i {
  flex: 1;
  background: #000;
}
.scale-bar b {
  flex: 1;
  background: #fff;
}
.scale-bottom {
  position: relative;
  height: 10px;
  margin-top: 5px;
  line-height: 10px;
}
.scale-bottom span {
  position: absolute;
  left: 87px;
  transform: translateX(-50%);
}
.scale-bottom span + span {
  left: 261px;
}

/* status bar */
.status {
  height: 14px;
  flex: none;
  background: #0a7acb;
  color: #fff;
  display: flex;
  align-items: center;
  padding: 0 5px 0 6px;
}
.status-right {
  margin-left: auto;
  display: flex;
  align-items: center;
  gap: 9px;
}
.s-msg {
  display: flex;
  align-items: center;
  gap: 1px;
  margin-right: 3px;
}
.s-units {
  margin-left: 6px;
  font-size: 7.6px;
}
</style>
